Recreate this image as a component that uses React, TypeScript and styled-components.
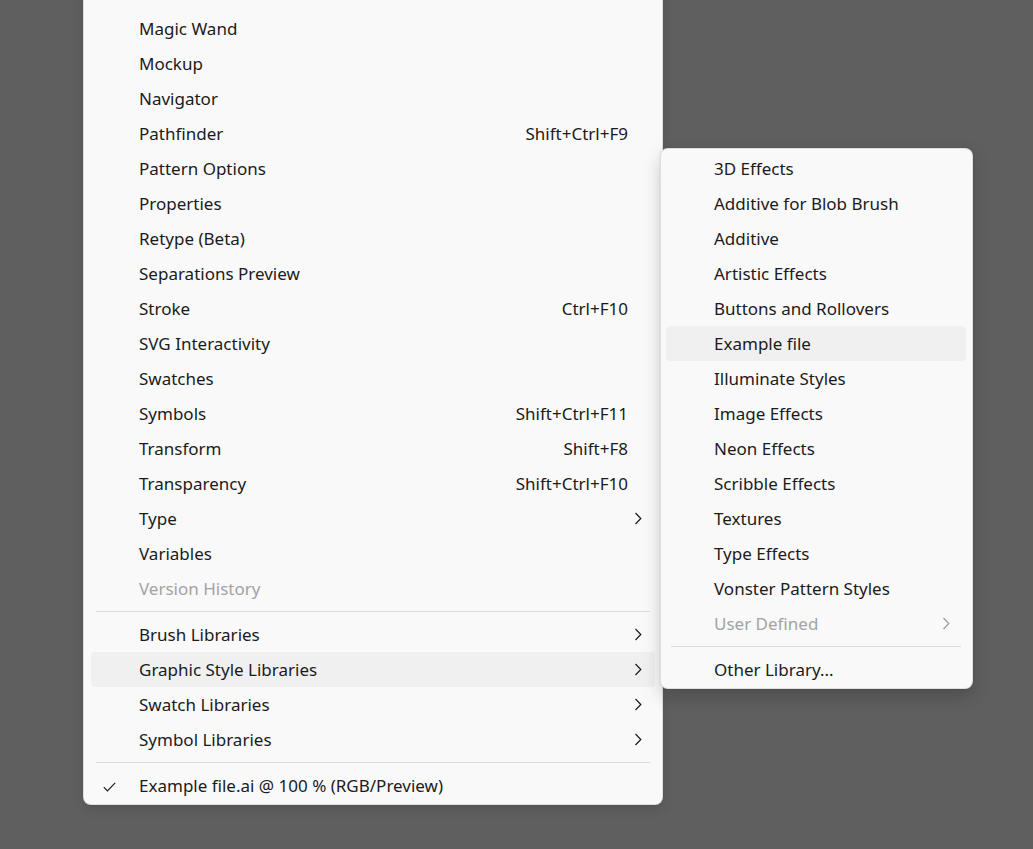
import React from "react";
import styled, { createGlobalStyle } from "styled-components";

const Global = createGlobalStyle`
  html, body { margin: 0; padding: 0; background: #5f5f5f; }
  body { font-family: "Noto Sans", "Segoe UI", sans-serif; overflow: hidden; }
  #root { width: 1033px; height: 849px; }
`;

const Stage = styled.div`
  position: relative;
  width: 1033px;
  height: 849px;
  overflow: hidden;
  padding-left: 83px;
  box-sizing: border-box;
`;

const Menu = styled.div<{ $width: number }>`
  width: ${(p) => p.$width}px;
  box-sizing: border-box;
  background: #f9f9f9;
  border: 1px solid rgba(0, 0, 0, 0.1);
  border-radius: 8px;
  display: flex;
  flex-direction: column;
`;

const MainMenu = styled(Menu)`
  margin-top: -27px;
  padding: 2px 7px 1px;
  box-shadow: 0 4px 12px rgba(0, 0, 0, 0.12);
`;

const SubMenu = styled(Menu)`
  position: absolute;
  left: 660px;
  top: 148px;
  padding: 2px 6px 1px 5px;
  box-shadow: 0 8px 18px rgba(0, 0, 0, 0.18), 0 0 3px rgba(0, 0, 0, 0.08);
`;

const Row = styled.div<{ $active?: boolean; $disabled?: boolean }>`
  height: 35px;
  display: flex;
  align-items: center;
  padding-left: 48px;
  box-sizing: border-box;
  border-radius: 4px;
  position: relative;
  background: ${(p) => (p.$active ? "#f0f0f0" : "transparent")};
  color: ${(p) => (p.$disabled ? "#a3a3a3" : "#1b1b1b")};
  font-size: 17px;
  white-space: nowrap;
`;

const Label = styled.span`
  flex: 1;
`;

const Shortcut = styled.span`
  color: #1b1b1b;
`;

const Trail = styled.span<{ $w: number }>`
  width: ${(p) => p.$w}px;
  height: 34px;
  display: flex;
  align-items: center;
  padding-left: 6px;
  padding-bottom: 1px;
  box-sizing: border-box;
`;

const Check = styled.span`
  position: absolute;
  left: 12px;
  top: 14px;
  display: flex;
`;

const Separator = styled.div<{ $inset: number }>`
  height: 1px;
  background: #dadada;
  margin: 5px ${(p) => p.$inset}px;
`;

const Chevron = ({ color }: { color: string }) => (
  <svg width="8" height="13" viewBox="0 0 8 13">
    <path d="M1.5 1 L6.8 6.5 L1.5 12" fill="none" stroke={color} strokeWidth="1.2" />
  </svg>
);

const CheckIcon = () => (
  <svg width="13" height="10" viewBox="0 0 13 10">
    <path d="M0.8 5.2 L4.4 8.8 L12.2 0.8" fill="none" stroke="#1b1b1b" strokeWidth="1.2" />
  </svg>
);

type Item =
  | { sep: true }
  | {
      sep?: false;
      label: string;
      shortcut?: string;
      sub?: boolean;
      disabled?: boolean;
      active?: boolean;
      checked?: boolean;
    };

const mainItems: Item[] = [
  { label: "Links" },
  { label: "Magic Wand" },
  { label: "Mockup" },
  { label: "Navigator" },
  { label: "Pathfinder", shortcut: "Shift+Ctrl+F9" },
  { label: "Pattern Options" },
  { label: "Properties" },
  { label: "Retype (Beta)" },
  { label: "Separations Preview" },
  { label: "Stroke", shortcut: "Ctrl+F10" },
  { label: "SVG Interactivity" },
  { label: "Swatches" },
  { label: "Symbols", shortcut: "Shift+Ctrl+F11" },
  { label: "Transform", shortcut: "Shift+F8" },
  { label: "Transparency", shortcut: "Shift+Ctrl+F10" },
  { label: "Type", sub: true },
  { label: "Variables" },
  { label: "Version History", disabled: true },
  { sep: true },
  { label: "Brush Libraries", sub: true },
  { label: "Graphic Style Libraries", sub: true, active: true },
  { label: "Swatch Libraries", sub: true },
  { label: "Symbol Libraries", sub: true },
  { sep: true },
  { label: "Example file.ai @ 100 % (RGB/Preview)", checked: true },
];

const subItems: Item[] = [
  { label: "3D Effects" },
  { label: "Additive for Blob Brush" },
  { label: "Additive" },
  { label: "Artistic Effects" },
  { label: "Buttons and Rollovers" },
  { label: "Example file", active: true },
  { label: "Illuminate Styles" },
  { label: "Image Effects" },
  { label: "Neon Effects" },
  { label: "Scribble Effects" },
  { label: "Textures" },
  { label: "Type Effects" },
  { label: "Vonster Pattern Styles" },
  { label: "User Defined", sub: true, disabled: true },
  { sep: true },
  { label: "Other Library..." },
];

const renderItems = (items: Item[], trail: number, sepInset: number) =>
  items.map((it, i) => {
    if (it.sep) return <Separator key={i} $inset={sepInset} />;
    return (
      <Row key={i} $active={it.active} $disabled={it.disabled}>
        {it.checked && (
          <Check>
            <CheckIcon />
          </Check>
        )}
        <Label>{it.label}</Label>
        {it.shortcut && <Shortcut>{it.shortcut}</Shortcut>}
        <Trail $w={trail}>{it.sub && <Chevron color={it.disabled ? "#9a9a9a" : "#1b1b1b"} />}</Trail>
      </Row>
    );
  });

export default function App() {
  return (
    <Stage>
      <Global />
      <MainMenu $width={580}>{renderItems(mainItems, 27, 5)}</MainMenu>
      <SubMenu $width={313}>{renderItems(subItems, 30, 5)}</SubMenu>
    </Stage>
  );
}
